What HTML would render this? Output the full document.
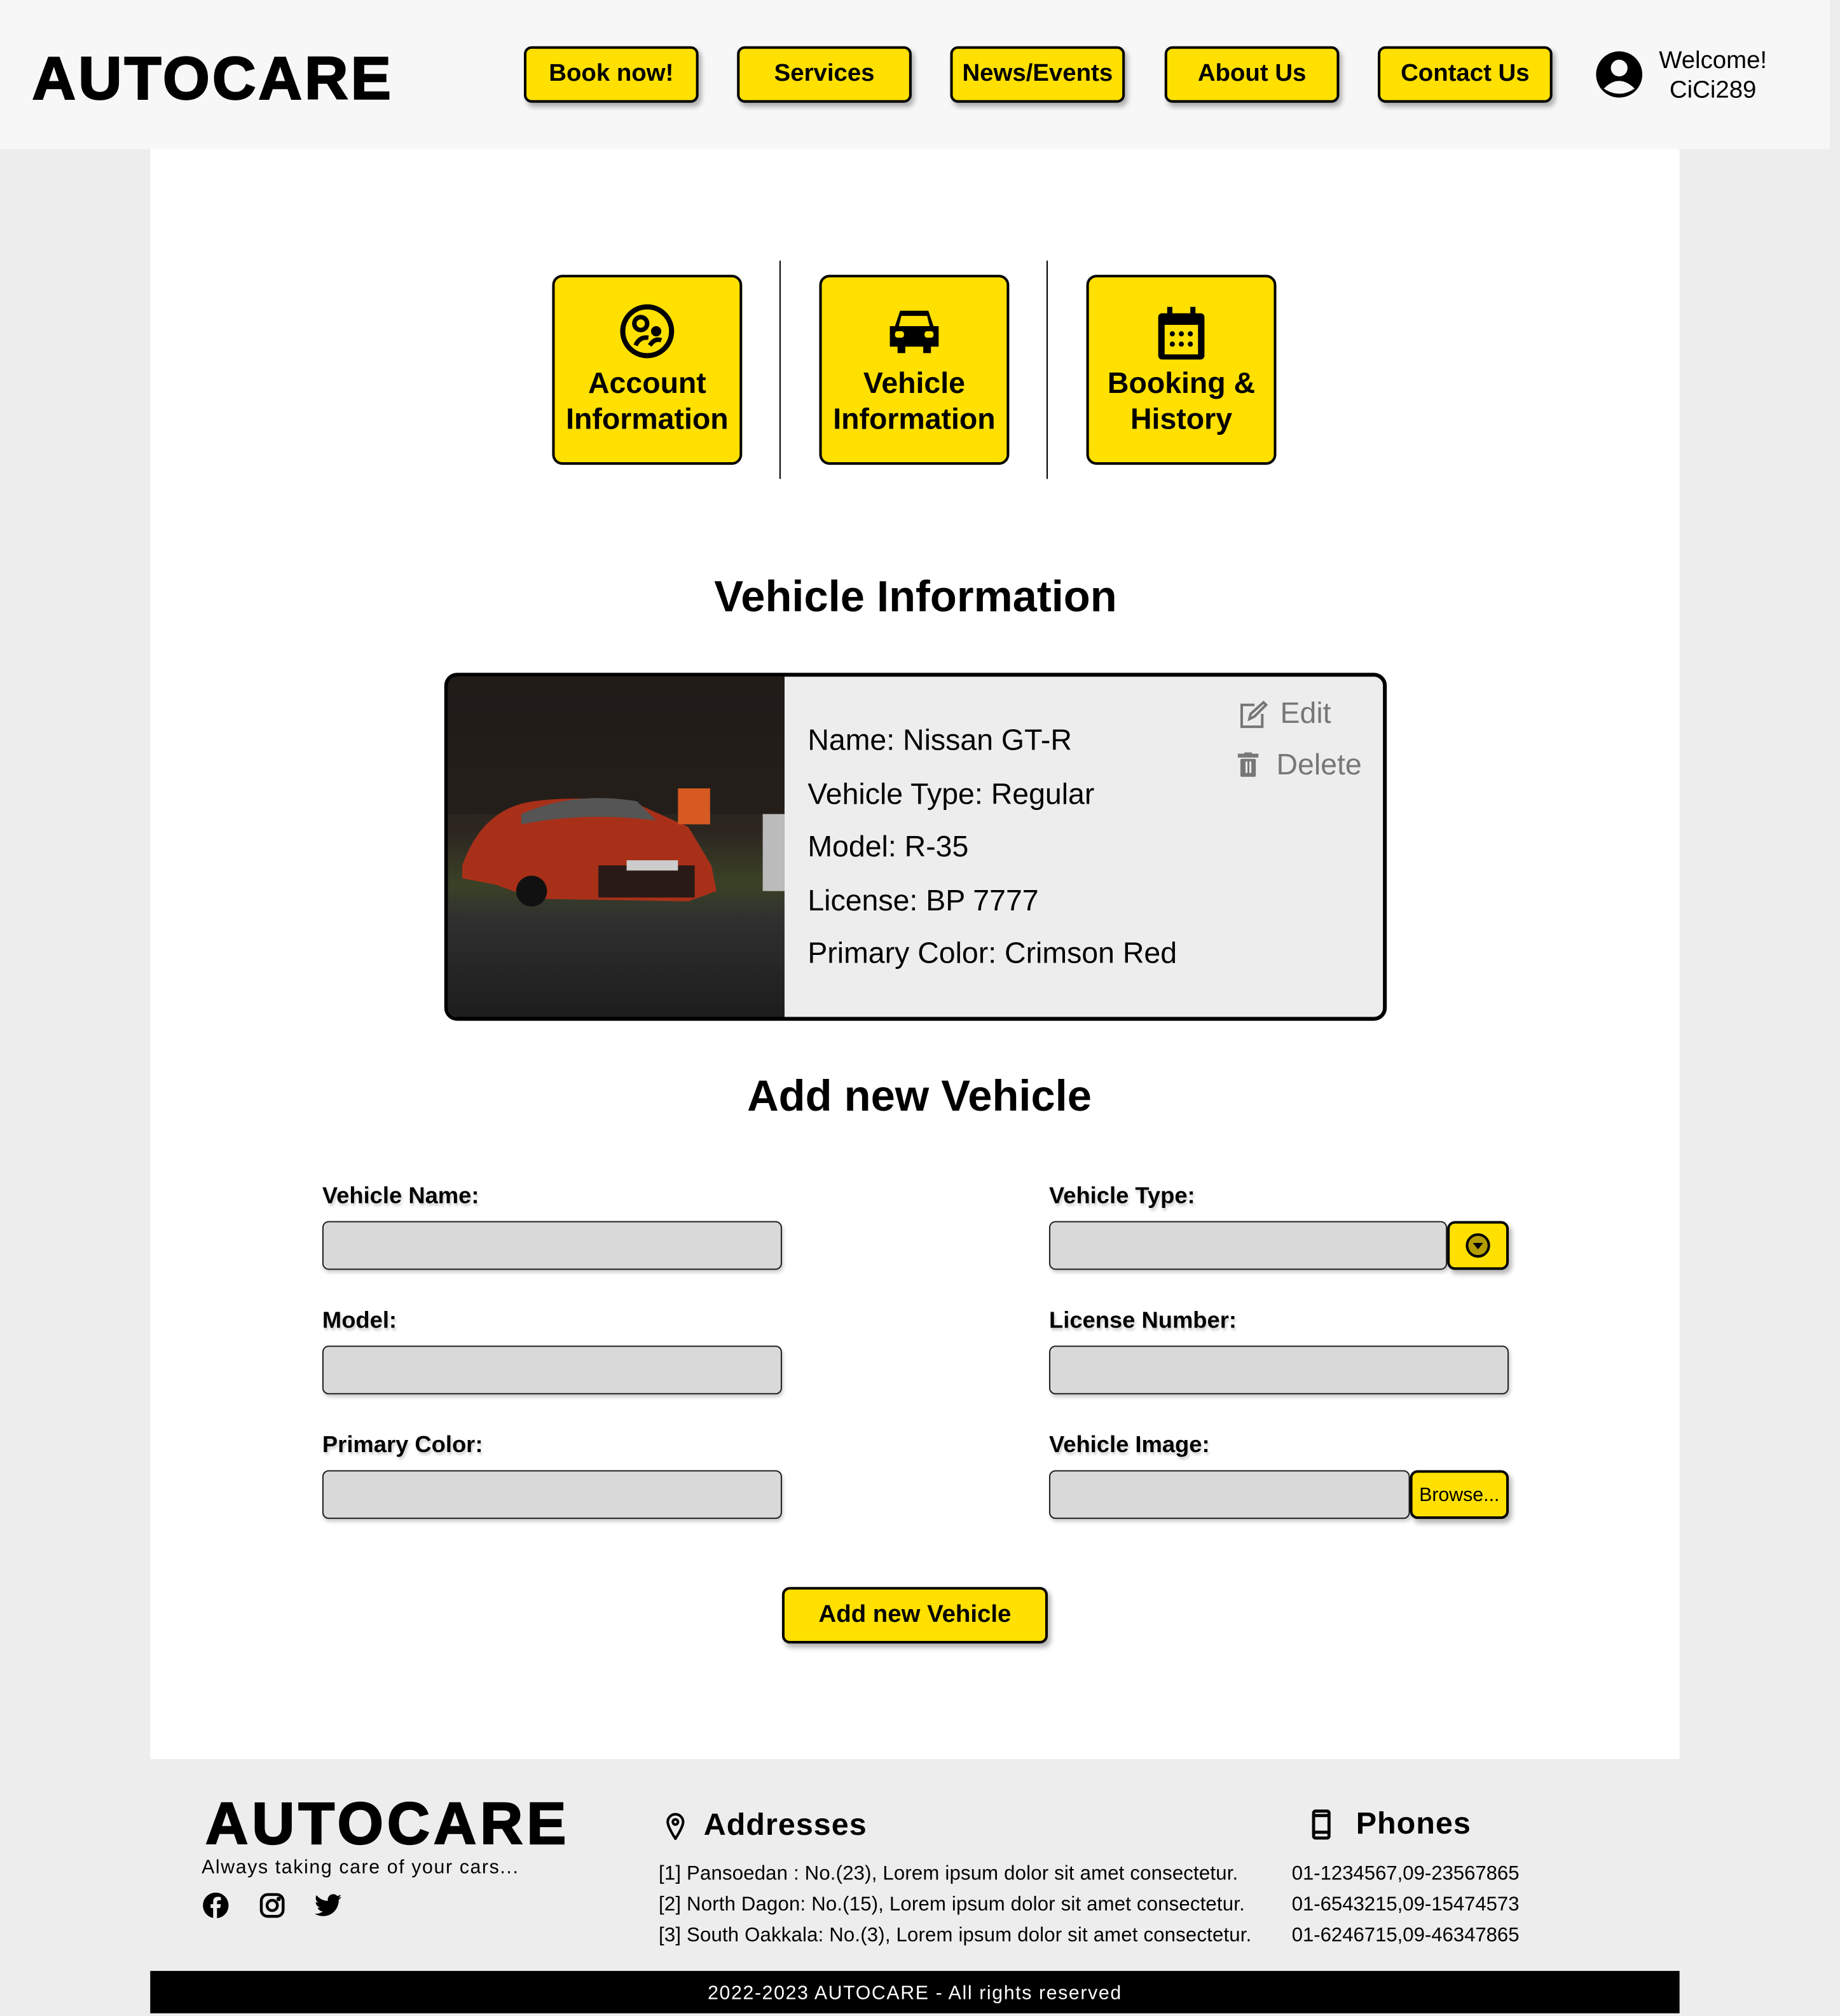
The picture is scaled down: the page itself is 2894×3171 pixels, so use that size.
<!DOCTYPE html>
<html><head><meta charset="utf-8">
<style>
*{box-sizing:border-box;margin:0;padding:0}
html,body{width:2894px;height:3168px;overflow:hidden;background:#ededed}
#w{position:absolute;left:0;top:0;width:1433px;height:1568px;transform:scale(2.0196);transform-origin:0 0;background:#ededed;font-family:"Liberation Sans",sans-serif;color:#000}
.a{position:absolute}
.hdr{left:0;top:0;width:1425px;height:116px;background:#f7f7f7}
.main{left:117px;top:116px;width:1191px;height:1254px;background:#fff}
.logo{font-weight:900;font-size:47px;letter-spacing:2px;-webkit-text-stroke:1.2px #000}
.nb{top:36px;width:136px;height:44px;background:#ffe000;border:2px solid #000;border-radius:6px;box-shadow:2px 3px 4px rgba(0,0,0,.3);font-weight:bold;font-size:19px;display:flex;align-items:center;justify-content:center}
.tile{top:214px;width:148px;height:148px;background:#ffe000;border:2px solid #000;border-radius:8px;font-weight:bold;font-size:23px;line-height:28px;text-align:center;display:flex;flex-direction:column;align-items:center;justify-content:flex-end;padding-bottom:20px}
.div{top:203px;width:1px;height:170px;background:#000}
.h{font-weight:bold;font-size:34px;text-align:center}
.lbl{font-weight:bold;font-size:18px;text-shadow:1px 2px 2px rgba(0,0,0,.2)}
.in{height:38px;background:#d9d9d9;border:1.5px solid #222;border-radius:5px;box-shadow:1px 2px 3px rgba(0,0,0,.2)}
.yb{background:#ffe000;border:2px solid #000;border-radius:6px;box-shadow:2px 3px 4px rgba(0,0,0,.3)}
.ct{font-size:23px;left:629px}
.ft{font-size:15.4px}
</style></head><body><div id="w">
<div class="a hdr"></div>
<div class="a main"></div>
<div class="a logo" style="left:25px;top:33px">AUTOCARE</div>
<div class="a nb" style="left:408px">Book now!</div>
<div class="a nb" style="left:574px">Services</div>
<div class="a nb" style="left:740px">News/Events</div>
<div class="a nb" style="left:907px">About Us</div>
<div class="a nb" style="left:1073px">Contact Us</div>
<svg class="a" style="left:1242px;top:39px" width="38" height="38" viewBox="0 0 38 38"><circle cx="19" cy="19" r="18" fill="#000"/><circle cx="19" cy="14" r="6.5" fill="#f7f7f7"/><path d="M7 30 Q19 18 31 30 Q19 38 7 30Z" fill="#f7f7f7"/></svg>
<div class="a" style="left:1288px;top:36px;font-size:19px;line-height:23px;text-align:center;width:92px">Welcome!<br>CiCi289</div>

<div class="a tile" style="left:430px"><svg width="44" height="44" viewBox="0 0 44 44" style="margin-bottom:4px"><circle cx="22" cy="22" r="19" fill="none" stroke="#000" stroke-width="4"/><circle cx="17" cy="16" r="5" fill="none" stroke="#000" stroke-width="3.5"/><circle cx="29" cy="22" r="4" fill="#000"/><path d="M13 33 Q16 26 23 27" fill="none" stroke="#000" stroke-width="3.5"/><path d="M24 33 Q28 27 33 29" fill="none" stroke="#000" stroke-width="3.5"/></svg>Account<br>Information</div>
<div class="a tile" style="left:638px"><svg width="46" height="40" viewBox="0 0 46 40" style="margin-bottom:6px"><path d="M12 4 H34 L38 16 H42 V32 H36 V37 H30 V32 H16 V37 H10 V32 H4 V16 H8Z" fill="#000"/><path d="M13 8 H33 L35 16 H11Z" fill="#ffe000"/><rect x="8" y="20" width="7" height="5" rx="2" fill="#ffe000"/><rect x="31" y="20" width="7" height="5" rx="2" fill="#ffe000"/></svg>Vehicle<br>Information</div>
<div class="a tile" style="left:846px"><svg width="40" height="44" viewBox="0 0 40 44" style="margin-bottom:2px"><rect x="2" y="6" width="36" height="36" rx="3" fill="#000"/><rect x="7" y="15" width="26" height="23" fill="#ffe000"/><rect x="9" y="1" width="4" height="8" fill="#000"/><rect x="27" y="1" width="4" height="8" fill="#000"/><g fill="#000"><circle cx="13" cy="22" r="2"/><circle cx="20" cy="22" r="2"/><circle cx="27" cy="22" r="2"/><circle cx="13" cy="30" r="2"/><circle cx="20" cy="30" r="2"/><circle cx="27" cy="30" r="2"/></g></svg>Booking &amp;<br>History</div>
<div class="a div" style="left:607px"></div>
<div class="a div" style="left:815px"></div>

<div class="a h" style="left:413px;top:446px;width:600px">Vehicle Information</div>

<div class="a" style="left:346px;top:524px;width:734px;height:271px;border:3px solid #000;border-radius:10px;background:#ededed;overflow:hidden">
<svg class="a" style="left:-3px;top:-3px" width="265" height="274" viewBox="0 0 265 274">
<defs><linearGradient id="g" x1="0" y1="0" x2="0" y2="1"><stop offset="0" stop-color="#231d1b"/><stop offset=".45" stop-color="#2d2620"/><stop offset=".6" stop-color="#3a4226"/><stop offset=".7" stop-color="#303030"/><stop offset="1" stop-color="#1b1b1b"/></linearGradient></defs>
<rect width="265" height="274" fill="url(#g)"/>
<rect x="0" y="0" width="265" height="110" fill="#201a18" opacity=".6"/>
<path d="M14 150 Q30 105 70 100 Q110 95 150 102 L190 120 L208 150 L212 170 L190 178 L70 176 L40 165 L14 160Z" fill="#a83019"/>
<path d="M60 110 Q100 92 150 100 L165 115 Q110 108 60 118Z" fill="#555"/>
<rect x="120" y="150" width="75" height="25" fill="#2a1a16"/>
<rect x="142" y="146" width="40" height="8" fill="#ccc"/>
<circle cx="68" cy="170" r="12" fill="#111"/>
<rect x="182" y="90" width="25" height="28" fill="#d65a22"/>
<rect x="248" y="110" width="17" height="60" fill="#bbb"/>
</svg>
</div>
<svg class="a" style="left:964px;top:545px" width="24" height="24" viewBox="0 0 24 24" fill="none" stroke="#777" stroke-width="2"><path d="M13 4H3V21H19V11"/><path d="M9 15L10 11L20 2L22 4L13 13Z"/></svg>
<div class="a" style="left:997px;top:542px;font-size:23px;color:#777">Edit</div>
<svg class="a" style="left:963px;top:586px" width="18" height="20" viewBox="0 0 18 20"><rect x="1" y="1" width="16" height="3" fill="#777"/><rect x="6" y="0" width="6" height="2" fill="#777"/><rect x="3" y="5" width="12" height="14" rx="1" fill="#777"/><rect x="7" y="7" width="1.5" height="9" fill="#ededed"/><rect x="10" y="7" width="1.5" height="9" fill="#ededed"/></svg>
<div class="a" style="left:994px;top:582px;font-size:23px;color:#777">Delete</div>
<div class="a ct" style="top:563px">Name: Nissan GT-R</div>
<div class="a ct" style="top:605px">Vehicle Type: Regular</div>
<div class="a ct" style="top:646px">Model: R-35</div>
<div class="a ct" style="top:688px">License: BP 7777</div>
<div class="a ct" style="top:729px">Primary Color: Crimson Red</div>

<div class="a h" style="left:416px;top:835px;width:600px">Add new Vehicle</div>

<div class="a lbl" style="left:251px;top:921px">Vehicle Name:</div>
<div class="a in" style="left:251px;top:951px;width:358px"></div>
<div class="a lbl" style="left:251px;top:1018px">Model:</div>
<div class="a in" style="left:251px;top:1048px;width:358px"></div>
<div class="a lbl" style="left:251px;top:1115px">Primary Color:</div>
<div class="a in" style="left:251px;top:1145px;width:358px"></div>

<div class="a lbl" style="left:817px;top:921px">Vehicle Type:</div>
<div class="a in" style="left:817px;top:951px;width:310px"></div>
<div class="a yb" style="left:1127px;top:951px;width:48px;height:38px"><svg style="position:absolute;left:12px;top:7px" width="20" height="20" viewBox="0 0 20 20"><circle cx="10" cy="10" r="8.5" fill="#b59c00" stroke="#000" stroke-width="2"/><path d="M6 8H14L10 13Z" fill="#000"/></svg></div>
<div class="a lbl" style="left:817px;top:1018px">License Number:</div>
<div class="a in" style="left:817px;top:1048px;width:358px"></div>
<div class="a lbl" style="left:817px;top:1115px">Vehicle Image:</div>
<div class="a in" style="left:817px;top:1145px;width:281px"></div>
<div class="a yb" style="left:1098px;top:1145px;width:77px;height:38px;font-size:15px;display:flex;align-items:center;justify-content:center">Browse...</div>

<div class="a yb" style="left:609px;top:1236px;width:207px;height:44px;font-weight:bold;font-size:19px;display:flex;align-items:center;justify-content:center">Add new Vehicle</div>

<div class="a logo" style="left:160px;top:1393px;font-size:46px;letter-spacing:3px">AUTOCARE</div>
<div class="a ft" style="left:157px;top:1446px;letter-spacing:.8px;font-size:15px">Always taking care of your cars...</div>
<svg class="a" style="left:158px;top:1474px" width="20" height="20" viewBox="0 0 20 20"><circle cx="10" cy="10" r="10" fill="#000"/><path d="M11 20V12H13.5L14 9H11V7.5Q11 6 12.5 6H14V3.5Q13 3.3 12 3.3Q8 3.3 8 7V9H6V12H8V20Z" fill="#ededed"/></svg>
<svg class="a" style="left:202px;top:1474px" width="20" height="20" viewBox="0 0 20 20" fill="none" stroke="#000" stroke-width="2.2"><rect x="1.5" y="1.5" width="17" height="17" rx="5"/><circle cx="10" cy="10" r="4"/><circle cx="15" cy="5" r=".6" fill="#000"/></svg>
<svg class="a" style="left:245px;top:1475px" width="21" height="18" viewBox="0 0 24 20"><path d="M24 2.4a10 10 0 0 1-2.8.8A5 5 0 0 0 23.3.4a10 10 0 0 1-3.1 1.2A4.9 4.9 0 0 0 11.8 6 14 14 0 0 1 1.7.9a4.9 4.9 0 0 0 1.5 6.6A4.9 4.9 0 0 1 1 6.9 4.9 4.9 0 0 0 4.9 11.8a5 5 0 0 1-2.2.1 4.9 4.9 0 0 0 4.6 3.4A9.9 9.9 0 0 1 0 17.3 14 14 0 0 0 7.5 19.5c9.1 0 14-7.5 14-14v-.6A10 10 0 0 0 24 2.4z" fill="#000"/></svg>

<svg class="a" style="left:518px;top:1411px" width="16" height="22" viewBox="0 0 16 22" fill="none" stroke="#000" stroke-width="2"><path d="M8 21C8 21 2 12 2 8A6 6 0 0 1 14 8C14 12 8 21 8 21Z"/><circle cx="8" cy="8" r="2"/></svg>
<div class="a" style="left:548px;top:1408px;font-weight:bold;font-size:24px;letter-spacing:.5px">Addresses</div>
<svg class="a" style="left:1021px;top:1409px" width="16" height="24" viewBox="0 0 16 24" fill="none" stroke="#000" stroke-width="2.4"><rect x="2" y="1.5" width="12" height="21" rx="1.5"/><path d="M2 5H14M2 18H14"/></svg>
<div class="a" style="left:1056px;top:1407px;font-weight:bold;font-size:24px;letter-spacing:.5px">Phones</div>
<div class="a ft" style="left:513px;top:1448px;line-height:24px;letter-spacing:.1px">[1] Pansoedan : No.(23), Lorem ipsum dolor sit amet consectetur.<br>[2] North Dagon: No.(15), Lorem ipsum dolor sit amet consectetur.<br>[3] South Oakkala: No.(3), Lorem ipsum dolor sit amet consectetur.</div>
<div class="a ft" style="left:1006px;top:1448px;line-height:24px">01-1234567,09-23567865<br>01-6543215,09-15474573<br>01-6246715,09-46347865</div>

<div class="a" style="left:117px;top:1535px;width:1191px;height:33px;background:#000;color:#fff;font-size:15px;letter-spacing:.8px;text-align:center;line-height:35px">2022-2023 AUTOCARE - All rights reserved</div>
</div></body></html>
